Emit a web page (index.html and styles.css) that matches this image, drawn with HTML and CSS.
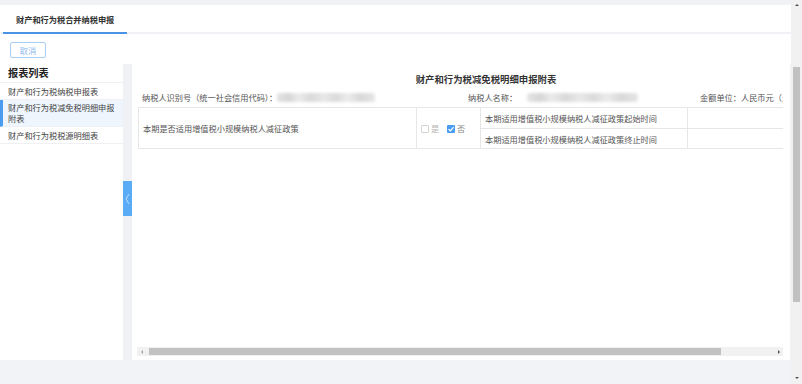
FILE: index.html
```html
<!DOCTYPE html>
<html>
<head>
    <meta charset="UTF-8">
    <title>财产和行为税合并纳税申报</title>
    <link rel="stylesheet" href="styles.css">
</head>
<body>
    <div class="page">
        <div class="main">
            <div class="topstrip"></div>
            <div class="tabs">
                <div class="tab active">财产和行为税合并纳税申报</div>
            </div>
            <div class="toolbar">
                <button class="btn">取消</button>
            </div>
            <div class="workspace">
                <aside class="sidebar">
                    <div class="side-title">报表列表</div>
                    <div class="side-item">财产和行为税纳税申报表</div>
                    <div class="side-item active">财产和行为税减免税明细申报附表</div>
                    <div class="side-item">财产和行为税税源明细表</div>
                </aside>
                <div class="toggle-col">
                    <div class="toggle">
                        <svg width="5" height="12" viewBox="0 0 5 12"><polyline points="4,1 1,6 4,11" fill="none" stroke="#d6ebff" stroke-width="0.8"/></svg>
                    </div>
                </div>
                <section class="content">
                    <div class="scroll">
                        <div class="sheet">
                            <div class="sheet-title">财产和行为税减免税明细申报附表</div>
                            <div class="info">
                                <div class="info-group g1">纳税人识别号（统一社会信用代码）：<span class="blur b1"></span></div>
                                <div class="info-group g2">纳税人名称：<span class="blur b2"></span></div>
                                <div class="info-group g3">金额单位：人民币元（元）</div>
                            </div>
                            <table class="grid">
                                <tr class="r1">
                                    <td class="c1" rowspan="2">本期是否适用增值税小规模纳税人减征政策</td>
                                    <td class="c2" rowspan="2">
                                        <span class="chk"></span><span class="opt off">是</span>
                                        <span class="chk on"><svg width="7" height="7" viewBox="0 0 7 7"><polyline points="1.3,3.6 2.9,5.1 5.8,1.9" fill="none" stroke="#fff" stroke-width="1.1"/></svg></span><span class="opt">否</span>
                                    </td>
                                    <td class="c3">本期适用增值税小规模纳税人减征政策起始时间</td>
                                    <td class="c4"></td>
                                </tr>
                                <tr class="r2">
                                    <td class="c3">本期适用增值税小规模纳税人减征政策终止时间</td>
                                    <td class="c4"></td>
                                </tr>
                            </table>
                        </div>
                    </div>
                    <div class="hscroll">
                        <span class="arrow-l"></span>
                        <div class="hthumb"></div>
                        <span class="arrow-r"></span>
                    </div>
                </section>
            </div>
            <div class="footer"></div>
        </div>
        <div class="vscroll">
            <span class="arrow-u"></span>
            <div class="vthumb"></div>
            <span class="arrow-d"></span>
        </div>
    </div>
</body>
</html>
```

FILE: styles.css
```css
html, body {
    margin: 0;
    height: 100%;
    overflow: hidden;
}

body {
    font-family: "Noto Sans CJK SC", "Noto Sans", sans-serif;
    font-size: 8.2px;
    color: #555;
    background: #f2f3f7;
}

.page {
    display: flex;
    height: 384px;
}

.main {
    width: 791px;
    display: flex;
    flex-direction: column;
}

.topstrip {
    height: 5px;
    background: #f1f2f6;
}

.tabs {
    height: 27px;
    background: #fff;
    border-bottom: 2px solid #f0f1f4;
    display: flex;
    padding-left: 3px;
}

.tab {
    padding: 0 13px;
    line-height: 28px;
    color: #333;
    font-weight: bold;
}

.tab.active {
    border-bottom: 2px solid #4a92e6;
    margin-bottom: -2px;
}

.toolbar {
    height: 30px;
    background: #fff;
    box-sizing: border-box;
    padding: 8px 0 0 10px;
}

.btn {
    width: 36px;
    height: 16px;
    padding: 0;
    border: 1px solid #a9cff6;
    border-radius: 2px;
    background: #fff;
    color: #8fb8ee;
    font-family: inherit;
    font-size: 8.2px;
    line-height: 14px;
}

.workspace {
    height: 296px;
    display: flex;
}

.sidebar {
    width: 123px;
    background: #fff;
}

.side-title {
    height: 18px;
    line-height: 18px;
    padding-left: 8px;
    font-size: 10.2px;
    font-weight: bold;
    color: #222;
    border-bottom: 1px solid #eef0f3;
}

.side-item {
    padding: 2px 6px 2px 8px;
    line-height: 12px;
    color: #444;
    border-bottom: 1px solid #eef0f3;
}

.side-item.active {
    padding: 2px 6px 2px 5px;
    line-height: 11px;
    border-left: 3px solid #4a9cf0;
    background: #eef5fd;
}

.toggle-col {
    width: 9px;
    background: #f0f1f5;
    padding-top: 117px;
}

.toggle {
    width: 9px;
    height: 35px;
    background: #5aacf6;
    display: flex;
    align-items: center;
    justify-content: center;
}

.content {
    width: 658px;
    background: #fff;
    display: flex;
    flex-direction: column;
}

.scroll {
    flex: 1;
    overflow: hidden;
    margin: 0 7px 0 5px;
}

.sheet {
    width: 698px;
}

.sheet-title {
    margin-top: 8px;
    line-height: 14px;
    text-align: center;
    font-size: 9.4px;
    font-weight: bold;
    color: #333;
}

.info {
    display: flex;
    margin-top: 5px;
    line-height: 12px;
    color: #555;
}

.info-group {
    display: flex;
    align-items: center;
    white-space: nowrap;
}

.g1 {
    width: 326px;
    padding-left: 5px;
}

.g2 {
    width: 232px;
}

.blur {
    display: inline-block;
    height: 9px;
    border-radius: 3px;
    background: linear-gradient(90deg, #e4e4e4 0%, #d6d6d6 12%, #ebebeb 22%, #d9d9d9 35%, #e8e8e8 48%, #dadada 60%, #ececec 72%, #d8d8d8 85%, #e6e6e6 100%);
    filter: blur(1.6px);
}

.b1 {
    width: 98px;
}

.b2 {
    width: 111px;
    margin-left: 10px;
}

.grid {
    margin: 4px 0 0 1px;
    border-collapse: collapse;
    color: #555;
}

.grid td {
    border: 1px solid #e6e6e6;
    padding: 0 4px;
    white-space: nowrap;
}

.r1 td.c3, .r1 td.c4 {
    height: 20px;
}

.r2 td.c3, .r2 td.c4 {
    height: 19px;
}

.c1 {
    width: 269px;
}

.c2 {
    width: 55px;
    padding-left: 4px;
}

.c3 {
    width: 198px;
}

.c4 {
    width: 120px;
}

.chk {
    display: inline-block;
    width: 6px;
    height: 6px;
    border: 1px solid #d4d4d4;
    border-radius: 1px;
    vertical-align: -1px;
    background: #fff;
}

.chk.on {
    width: 8px;
    height: 8px;
    border: none;
    background: #4a9cf0;
    margin-left: 6px;
}

.chk.on svg {
    display: block;
    width: 8px;
    height: 8px;
}

.opt {
    margin-left: 2px;
    color: #888;
}

.opt.off {
    color: #b5b5b5;
}

.hscroll {
    height: 9px;
    margin: 0 7px 4px 5px;
    background: #f1f1f1;
    display: flex;
    align-items: center;
}

.hthumb {
    width: 572px;
    height: 7px;
    background: #c1c1c1;
    margin-left: 6px;
}

.arrow-l {
    margin-left: 4px;
    border-right: 2px solid #a3a3a3;
    border-top: 2px solid transparent;
    border-bottom: 2px solid transparent;
}

.arrow-r {
    margin-left: 57px;
    border-left: 2px solid #505050;
    border-top: 2px solid transparent;
    border-bottom: 2px solid transparent;
}

.footer {
    flex: 1;
    background: #f2f3f7;
}

.vscroll {
    width: 11px;
    background: #f1f1f1;
    display: flex;
    flex-direction: column;
    align-items: center;
}

.arrow-u {
    margin-top: 4px;
    border-bottom: 2px solid #505050;
    border-left: 2px solid transparent;
    border-right: 2px solid transparent;
}

.vthumb {
    width: 7px;
    height: 235px;
    margin-top: 61px;
    background: #c1c1c1;
}

.arrow-d {
    margin-top: 75px;
    border-top: 2px solid #505050;
    border-left: 2px solid transparent;
    border-right: 2px solid transparent;
}
```
